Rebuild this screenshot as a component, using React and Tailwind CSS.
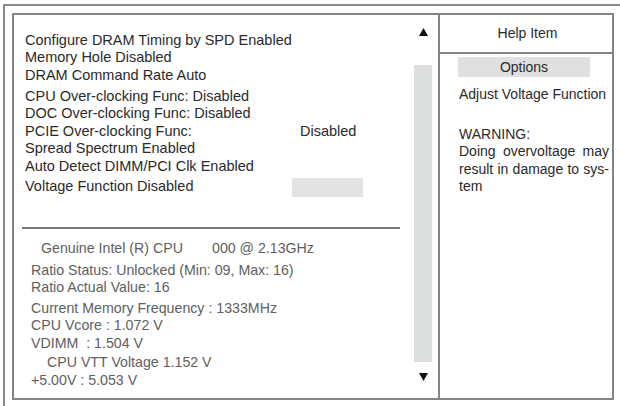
export default function App() {
  const font = { fontFamily: '"Liberation Sans", Arial, Helvetica, sans-serif' };

  const UpArrow = () => (
    <svg width="9" height="8" viewBox="0 0 9 8" className="block">
      <polygon points="4.5,0 9,8 0,8" fill="#111" />
    </svg>
  );
  const DownArrow = () => (
    <svg width="9" height="8" viewBox="0 0 9 8" className="block">
      <polygon points="0,0 9,0 4.5,8" fill="#111" />
    </svg>
  );

  return (
    <div className="w-[620px] h-[406px] bg-white overflow-hidden pl-[3px] pt-[4px]" style={font}>
      {/* outer frame */}
      <div className="h-[420px] w-[640px] border-l-2 border-t-2 border-[#8a8a8a] pl-[7px] pt-[7px]">
        {/* setup window */}
        <div className="w-[602px] h-[387px] border-2 border-[#858585] flex">
          {/* settings panel */}
          <div className="w-[424px] h-full flex">
            <div className="w-[400px] h-full flex flex-col">
              <div className="pt-[16.5px] pl-[11px] text-[14.5px] text-[#2a2a2a] leading-[17.5px]">
                <div>Configure DRAM Timing by SPD Enabled</div>
                <div>Memory Hole Disabled</div>
                <div>DRAM Command Rate Auto</div>
                <div className="mt-[3.5px]">CPU Over-clocking Func: Disabled</div>
                <div>DOC Over-clocking Func: Disabled</div>
                <div className="flex">
                  <span className="w-[275px]">PCIE Over-clocking Func:</span>
                  <span>Disabled</span>
                </div>
                <div>Spread Spectrum Enabled</div>
                <div>Auto Detect DIMM/PCI Clk Enabled</div>
                <div className="mt-[2.5px] flex items-center h-[19px]">
                  <span className="w-[267px]">Voltage Function Disabled</span>
                  <span className="w-[71px] h-[19px] bg-[#e3e3e3]"></span>
                </div>
              </div>
              <div className="mt-[30.5px] ml-[8px] w-[378px] h-[2px] bg-[#7a7a7a]"></div>
              <div className="pl-[17px] text-[14.2px] text-[#606060] leading-[17px]">
                <div className="mt-[11px] flex">
                  <span className="pl-[10px] w-[181px]">Genuine Intel (R) CPU</span>
                  <span>000 @ 2.13GHz</span>
                </div>
                <div className="mt-[5px]">Ratio Status: Unlocked (Min: 09, Max: 16)</div>
                <div>Ratio Actual Value: 16</div>
                <div className="mt-[4px]">Current Memory Frequency : 1333MHz</div>
                <div>CPU Vcore : 1.072 V</div>
                <div className="mt-[1px]">VDIMM&nbsp; : 1.504 V</div>
                <div className="mt-[2px] pl-[16px]">CPU VTT Voltage 1.152 V</div>
                <div className="mt-[1px]">+5.00V : 5.053 V</div>
              </div>
            </div>
            {/* scroll bar */}
            <div className="w-[18px] h-full flex flex-col items-center">
              <div className="mt-[13px]">
                <UpArrow />
              </div>
              <div className="mt-[29px] w-[18px] h-[297px] bg-[#dcdfdd]"></div>
              <div className="mt-[11px]">
                <DownArrow />
              </div>
            </div>
          </div>
          {/* help panel */}
          <div className="flex-1 h-full border-l-2 border-[#858585] text-[14px] text-[#2a2a2a]">
            <div className="h-[39px] border-b-2 border-[#858585] flex items-center justify-center pl-[3px]">
              Help Item
            </div>
            <div className="mt-[3px] ml-[18px] w-[132px] h-[20px] bg-[#e0e0e0] flex items-center justify-center">
              Options
            </div>
            <div className="pl-[19px] w-[169px] leading-[17.5px]">
              <div className="mt-[8.5px]">Adjust Voltage Function</div>
              <div className="mt-[22.5px]">WARNING:</div>
              <div className="text-justify [text-align-last:justify]">Doing overvoltage may</div>
              <div className="text-justify [text-align-last:justify]">result in damage to sys-</div>
              <div>tem</div>
            </div>
          </div>
        </div>
      </div>
    </div>
  );
}
